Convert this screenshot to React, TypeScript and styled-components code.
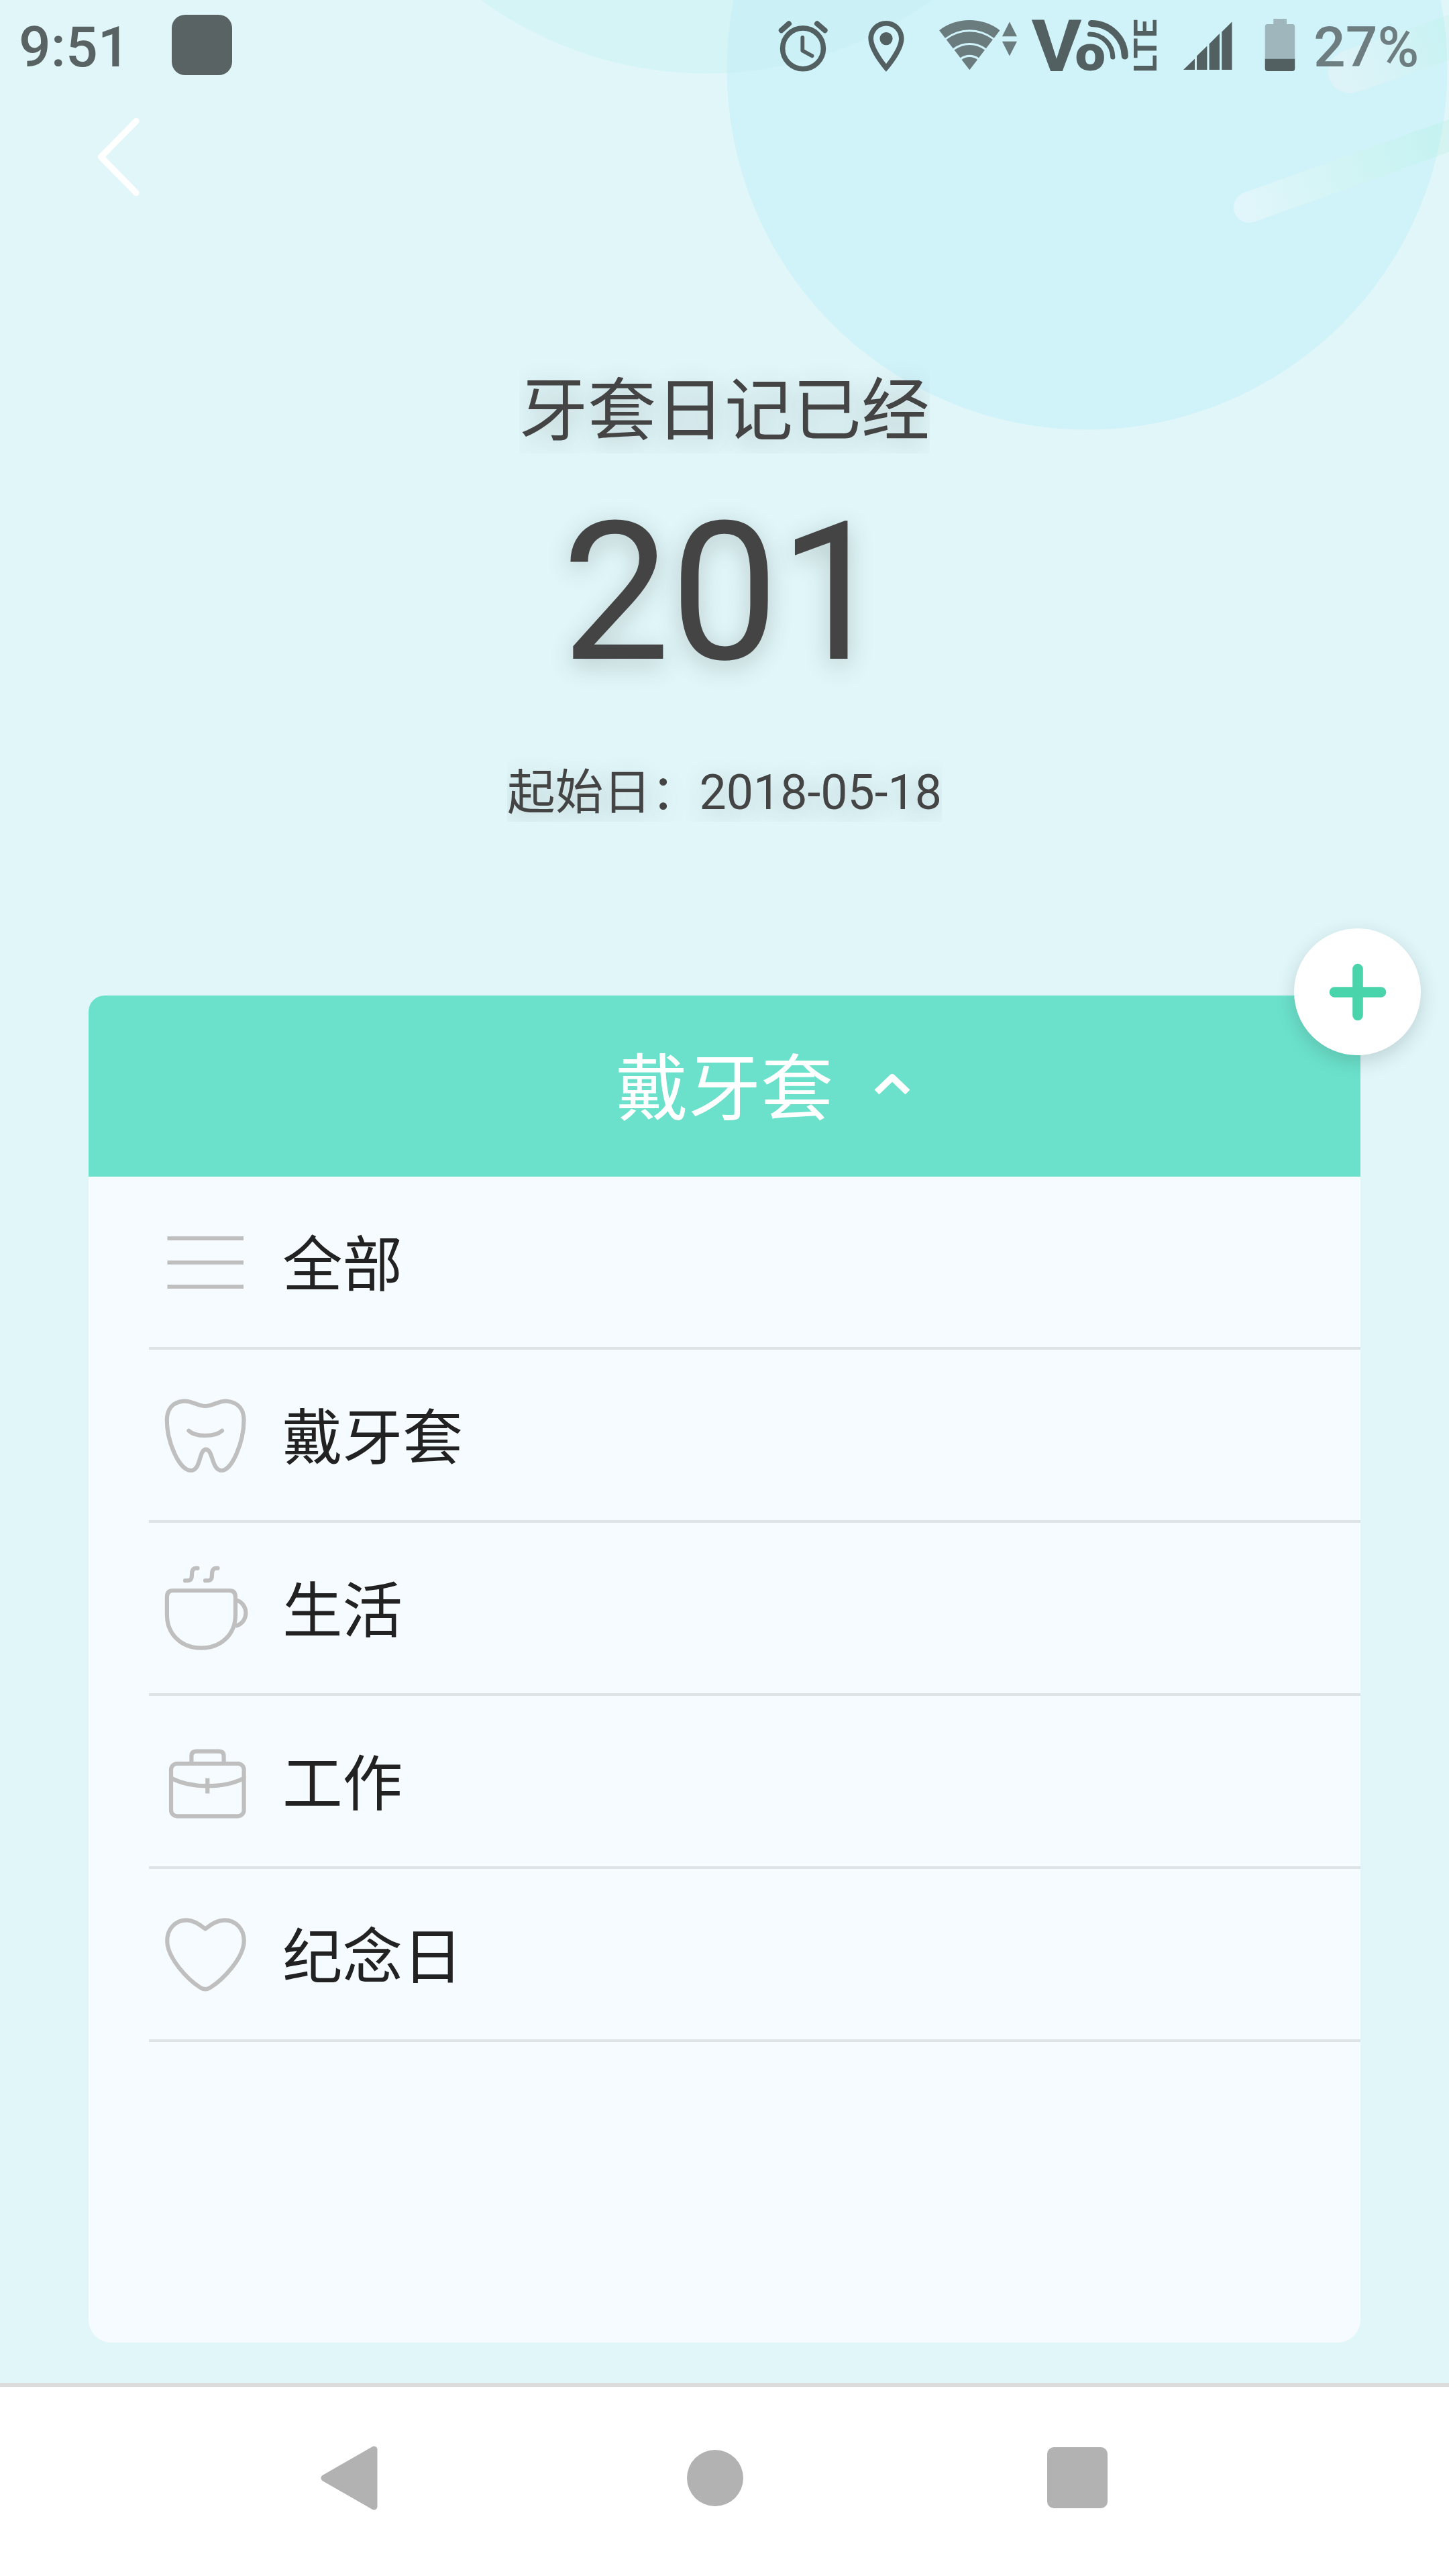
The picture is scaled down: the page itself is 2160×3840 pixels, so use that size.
import React from "react";
import styled, { createGlobalStyle } from "styled-components";

const GlobalStyle = createGlobalStyle`
  html, body { margin: 0; padding: 0; }
  body { background: #e0f6f9; }
  *, *::before, *::after { box-sizing: border-box; }
`;

const Screen = styled.div`
  position: relative;
  display: flex;
  flex-direction: column;
  width: 2160px;
  height: 3840px;
  overflow: hidden;
  background: #e0f6f9;
  font-family: Roboto, "Noto Sans CJK SC", sans-serif;
  color: #444;
`;

const Backdrop = styled.svg`
  position: absolute;
  top: 0;
  left: 0;
  width: 2160px;
  height: 700px;
`;

const StatusBar = styled.header`
  position: relative;
  display: flex;
  align-items: flex-start;
  height: 142px;
  padding-left: 28px;
  font-size: 84px;
  font-weight: 500;
  line-height: 142px;
`;

const Clock = styled.span`
  width: 228px;
  color: #5a6364;
`;

const Notification = styled.span`
  width: 90px;
  height: 90px;
  margin: 22px auto 0 0;
  border-radius: 20px;
  background: #5a6364;
`;

const StatusIcon = styled.svg<{ $gap: number }>`
  flex: none;
  height: 142px;
  margin-left: ${(p) => p.$gap}px;
  overflow: visible;
`;

const BatteryLevel = styled.span`
  width: 202px;
  margin-left: 26px;
  color: #6d7d80;
`;

const TitleBar = styled.div`
  position: relative;
  display: flex;
  align-items: center;
  height: 184px;
  padding-left: 139px;
`;

const Hero = styled.section`
  position: relative;
  display: flex;
  flex-direction: column;
  align-items: center;
  padding-top: 215px;
  text-shadow: 0 9px 36px rgba(60, 60, 50, 0.24);
`;

const HeroTitle = styled.h1`
  margin: 0;
  padding-top: 9px;
  overflow: hidden;
  font-size: 102px;
  font-weight: 400;
  line-height: 126px;
`;

const DayCount = styled.div`
  margin-top: 58px;
  font-size: 288px;
  line-height: 300px;
`;

const StartDate = styled.div`
  margin-top: 93px;
  padding-top: 12px;
  overflow: hidden;
  font-size: 71.6px;
  line-height: 86px;
  white-space: nowrap;
`;

const Panel = styled.main`
  position: relative;
  flex: 1;
  margin: 259px 132px 60px;
  border-radius: 24px 24px 34px 34px;
  background: #f5fbfe;
`;

const PanelHeader = styled.div`
  display: grid;
  grid-template-columns: 1fr auto 1fr;
  align-items: center;
  height: 270px;
  border-radius: 24px 24px 0 0;
  background: #6be1cb;
  color: #fff;
`;

const PanelTitle = styled.h2`
  grid-column: 2;
  margin: 0;
  padding-top: 10px;
  font-size: 108px;
  font-weight: 400;
  line-height: 140px;
`;

const Chevron = styled.svg`
  width: 56px;
  height: 40px;
  margin: 0 0 6px 60px;
`;

const AddButton = styled.button`
  position: absolute;
  top: -100px;
  right: -90px;
  display: flex;
  align-items: center;
  justify-content: center;
  width: 189px;
  height: 189px;
  padding: 0;
  border: 0;
  border-radius: 50%;
  background: #fff;
  box-shadow: 0 9px 28px rgba(40, 50, 50, 0.18);
`;

const CategoryList = styled.ul`
  margin: 0;
  padding: 0 0 0 90px;
  list-style: none;
`;

const CategoryRow = styled.li`
  display: flex;
  align-items: center;
  height: 258px;
  padding-left: 14px;
  border-bottom: 4px solid #dee3e6;
`;

const CategoryIcon = styled.svg`
  width: 140px;
  height: 140px;
  fill: none;
  stroke: #bfbfbf;
  stroke-width: 6.2;
  stroke-linejoin: round;
`;

const CategoryName = styled.span`
  margin-left: 45px;
  padding-top: 12px;
  font-size: 89.6px;
  line-height: 120px;
  color: #222;
`;

const NavBar = styled.nav`
  position: relative;
  display: flex;
  align-items: center;
  height: 288px;
  padding: 0 0 11px 477px;
  border-top: 6px solid #dcdcdc;
  background: #fff;
`;

const NavBack = styled.svg`
  width: 86px;
  height: 98px;
`;

const NavHome = styled.span`
  width: 84px;
  height: 84px;
  margin-left: 461px;
  border-radius: 50%;
  background: #b2b2b2;
`;

const NavRecent = styled.span`
  width: 90px;
  height: 91px;
  margin-left: 453px;
  border-radius: 10px;
  background: #b2b2b2;
`;

const DARK = "#526062";
const MUTED = "#6b7c7f";

/* One sector of the wifi fan, centred on its lower tip. */
const wifiBand = (outer: number, inner: number) => {
  const a = (37.4 * Math.PI) / 180;
  const at = (r: number, side: number) =>
    `${1445.3 + side * r * Math.sin(a)} ${104.3 - r * Math.cos(a)}`;
  return `M${at(outer, -1)} A${outer} ${outer} 0 0 1 ${at(outer, 1)} L${at(inner, 1)} A${inner || 1} ${inner || 1} 0 0 0 ${at(inner, -1)} Z`;
};

const categories = [
  { name: "全部", icon: <path d="M13.5 35H127M13.5 71H127M13.5 107H127" /> },
  {
    name: "戴牙套",
    icon: (
      <>
        <path d="M37 19.7C50 18 57 27 70 27C83 27 90 18 103 19.7C119 21.5 127.5 32 127.5 48C127.5 80 110 123 94.5 123C79 123 82 91.7 71 91.7C60 91.7 64 123 48.5 123C31 123 12.8 80 12.8 48C12.8 32 21 21.5 37 19.7Z" />
        <path strokeLinecap="round" d="M45.4 63.7Q53 71 70 71Q87 71 95 63.7" />
      </>
    ),
  },
  {
    name: "生活",
    icon: (
      <>
        <path strokeLinecap="round" d="M40 29.2H43C49 29.2 50 26 50 20C50 13.5 52 10.7 57 10.7H58.5M70 29.2H73C79 29.2 80 26 80 20C80 13.5 82 10.7 87 10.7H88.5" />
        <path d="M22 44H106Q115 44 115 54V80C115 110 93 129.7 64 129.7C35 129.7 12.9 110 12.9 80V54Q12.9 44 22 44Z" />
        <path d="M116 58.5C124 60 130.4 68 130.4 77.3C130.4 87 124 95 115 96.8" />
      </>
    ),
  },
  {
    name: "工作",
    icon: (
      <>
        <rect x="19" y="44" width="108.6" height="78.3" rx="9" />
        <path d="M49.4 44V33Q49.4 25.7 57 25.7H90Q97.6 25.7 97.6 33V44" />
        <path d="M20 66Q42 77.3 73.3 77.3Q105 77.3 127 66M73.3 65.7V88.5" />
      </>
    ),
  },
  {
    name: "纪念日",
    icon: (
      <path d="M70 32.3C61 25 52 19.3 42 19.3C25 19.3 13.2 33 13.2 50C13.2 76 44 108 62 119.5Q70 125 78 119.5C96 108 127.7 76 127.7 50C127.7 33 116 19.3 98.6 19.3C88 19.3 79 25 70 32.3Z" />
    ),
  },
];

export default function App() {
  return (
    <>
      <GlobalStyle />
      <Screen>
        <Backdrop viewBox="0 0 2160 700">
          <defs>
            <linearGradient id="streakLow" gradientUnits="userSpaceOnUse" x1="1840" y1="318" x2="2165" y2="200">
              <stop offset="0" stopColor="#e2f6fc" />
              <stop offset="0.5" stopColor="#d2f4f4" />
              <stop offset="0.9" stopColor="#c7f2f2" />
            </linearGradient>
            <linearGradient id="streakHigh" gradientUnits="userSpaceOnUse" x1="1985" y1="118" x2="2160" y2="55">
              <stop offset="0" stopColor="#def3f8" />
              <stop offset="0.4" stopColor="#d8f3f7" />
              <stop offset="1" stopColor="#c8f2f3" />
            </linearGradient>
            <clipPath id="bubble">
              <circle cx="1620.5" cy="103.5" r="537" />
            </clipPath>
          </defs>
          <circle cx="1053" cy="-461" r="570.5" fill="#d5f4f5" />
          <circle cx="1620.5" cy="103.5" r="537" fill="#d0f2f9" />
          <circle cx="1053" cy="-461" r="570.5" fill="#cbf0f6" clipPath="url(#bubble)" />
          <path d="M1862 309L2200 188" stroke="#d5f4f1" strokeWidth="46" />
          <path d="M2012 107L2200 42" stroke="#d9f4f4" strokeWidth="64" />
          <g clipPath="url(#bubble)" strokeLinecap="round">
            <path d="M1862 309L2200 188" stroke="url(#streakLow)" strokeWidth="46" />
            <path d="M2012 107L2200 42" stroke="url(#streakHigh)" strokeWidth="64" />
          </g>
        </Backdrop>

        <StatusBar>
          <Clock>9:51</Clock>
          <Notification />
          <StatusIcon $gap={0} width="80" viewBox="1157 0 80 142" fill="none" stroke={DARK} strokeLinecap="round">
            <circle cx="1197" cy="72.3" r="30.4" strokeWidth="7.6" />
            <path d="M1196.3 56V75.5L1210.5 83.3" strokeWidth="5.8" strokeLinejoin="round" />
            <path d="M1164.8 45.3L1176 35.3M1218 35.3L1229.6 45.3" strokeWidth="8" />
          </StatusIcon>
          <StatusIcon $gap={53} width="62" viewBox="1290 0 62 142" fill={DARK}>
            <path
              transform="translate(1275.4 23.4) scale(3.8)"
              d="M12 2C8.13 2 5 5.13 5 9c0 5.25 7 13 7 13s7-7.75 7-13c0-3.87-3.13-7-7-7zM7 9c0-2.76 2.24-5 5-5s5 2.24 5 5c0 2.88-2.88 7.19-5 9.88C9.92 16.21 7 11.85 7 9z"
            />
            <circle cx="1321" cy="57.6" r="9.6" />
          </StatusIcon>
          <StatusIcon $gap={44} width="124" viewBox="1396 0 124 142" fill={MUTED}>
            <path d={wifiBand(74.4, 60)} />
            <path d={wifiBand(57, 40.4)} />
            <path d={wifiBand(37.4, 22.6)} />
            <path d={wifiBand(19.4, 0)} />
            <path d="M1504.9 32.5L1516 54.3H1493.9ZM1504.9 83.5L1516 61.7H1493.9Z" />
          </StatusIcon>
          <StatusIcon $gap={16} width="192" viewBox="1536 0 192 142" fill={DARK}>
            <text x="1537.6" y="106" fontFamily="Roboto" fontWeight="700" fontSize="107" textLength="75" lengthAdjust="spacingAndGlyphs">V</text>
            <text x="1602.6" y="105.2" fontFamily="Roboto" fontWeight="900" fontSize="74" textLength="45.5" lengthAdjust="spacingAndGlyphs">o</text>
            <g fill="none" stroke={DARK} strokeLinecap="round">
              <path d="M1627 35A49.8 49.8 0 0 1 1676.8 83.5" strokeWidth="10" />
              <path d="M1624.5 51A34.6 34.6 0 0 1 1658.8 85" strokeWidth="7.2" />
            </g>
            <text transform="translate(1724 108.5) rotate(-90)" fontFamily="Roboto" fontWeight="700" fontSize="48" textLength="80" lengthAdjust="spacingAndGlyphs">LTE</text>
          </StatusIcon>
          <StatusIcon $gap={34} width="76" viewBox="1762 0 76 142" fill={DARK}>
            <path d="M1764 104L1781 87.5V104ZM1784 104V83.5L1799.4 68.5V104ZM1802.6 104V65.5L1818 50V104ZM1821.3 104V47.5L1836.5 32.5V104Z" />
          </StatusIcon>
          <StatusIcon $gap={46} width="48" viewBox="1884 0 48 142">
            <path d="M1898.3 36V28H1918V36H1926.5Q1930.3 36 1930.3 40V88H1885.7V40Q1885.7 36 1889.5 36Z" fill="#9fb7bc" />
            <path d="M1885.7 87.7H1930.3V102Q1930.3 106 1926.5 106H1889.5Q1885.7 106 1885.7 102Z" fill={DARK} />
          </StatusIcon>
          <BatteryLevel>27%</BatteryLevel>
        </StatusBar>

        <TitleBar>
          <svg width="76" height="130" viewBox="140 169 76 130" fill="none" stroke="#fff" strokeWidth="9.4" strokeLinecap="round">
            <path d="M204 180.5L151.5 234L204 287.5" strokeLinejoin="round" />
          </svg>
        </TitleBar>

        <Hero>
          <HeroTitle>牙套日记已经</HeroTitle>
          <DayCount>201</DayCount>
          <StartDate>起始日：2018-05-18</StartDate>
        </Hero>

        <Panel>
          <PanelHeader>
            <PanelTitle>戴牙套</PanelTitle>
            <Chevron viewBox="0 0 56 40" fill="none" stroke="#fff" strokeWidth="10">
              <path d="M5 32L28 10L51 32" strokeLinejoin="round" />
            </Chevron>
          </PanelHeader>
          <CategoryList>
            {categories.map((c) => (
              <CategoryRow key={c.name}>
                <CategoryIcon viewBox="0 0 140 140">{c.icon}</CategoryIcon>
                <CategoryName>{c.name}</CategoryName>
              </CategoryRow>
            ))}
          </CategoryList>
          <AddButton aria-label="add">
            <svg width="86" height="86" viewBox="0 0 86 86" stroke="#4ad4ab" strokeWidth="15.6" strokeLinecap="round">
              <path d="M8.5 43H77.5M43 8.5V77.5" />
            </svg>
          </AddButton>
        </Panel>

        <NavBar>
          <NavBack viewBox="0 0 86 98" fill="#b2b2b2" stroke="#b2b2b2" strokeWidth="10" strokeLinejoin="round">
            <path d="M6.5 49L80.5 6.5V91.5Z" />
          </NavBack>
          <NavHome />
          <NavRecent />
        </NavBar>
      </Screen>
    </>
  );
}
